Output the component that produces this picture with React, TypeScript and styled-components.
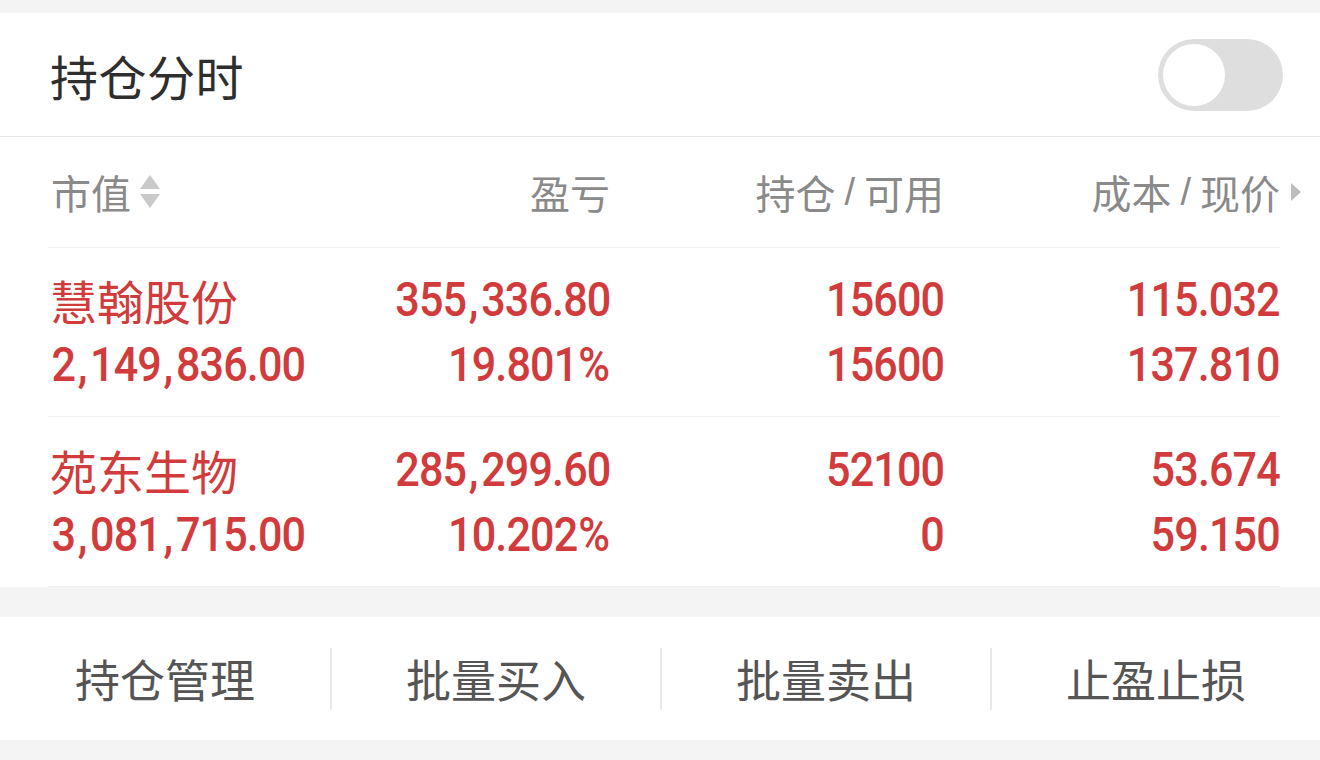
import React from "react";
import styled, { createGlobalStyle } from "styled-components";

const GlobalStyle = createGlobalStyle`
  html, body { margin: 0; padding: 0; background: #f4f4f4; }
  body { font-family: "Noto Sans CJK SC", "Noto Sans", sans-serif; }
  * { box-sizing: border-box; }
`;

const RED = "#d13b3b";
const NUM_FONT = `"Roboto", "Noto Sans", sans-serif`;

const Page = styled.div`
  width: 1320px;
  height: 760px;
  padding-top: 13px;
  background: #f4f4f4;
  overflow: hidden;
`;

const Card = styled.section`
  background: #fff;
`;

const Header = styled.header`
  height: 124px;
  display: flex;
  align-items: center;
  justify-content: space-between;
  padding: 0 37px 0 50px;
  border-bottom: 1px solid #e6e6e6;
`;

const Title = styled.h1`
  margin: 0;
  font-size: 48px;
  font-weight: 400;
  color: #2e2e2e;
  letter-spacing: 0.5px;
`;

const Toggle = styled.div`
  width: 125px;
  height: 72px;
  border-radius: 36px;
  background: #dedede;
  display: flex;
  align-items: center;
  padding-left: 5px;
`;

const Knob = styled.div`
  width: 62px;
  height: 62px;
  border-radius: 50%;
  background: #fff;
`;

const Table = styled.div`
  padding: 0 40px 0 48px;
`;

const Grid = styled.div<{ $h: number }>`
  display: grid;
  grid-template-columns: 282px 280px 334px 1fr;
  height: ${(p) => p.$h}px;
  align-items: center;
  border-bottom: 1px solid #efefef;
`;

const HeadCell = styled.div<{ $right?: boolean }>`
  position: relative;
  display: flex;
  align-items: center;
  justify-content: ${(p) => (p.$right ? "flex-end" : "flex-start")};
  font-size: 40px;
  color: #8a8a8a;
  padding-left: ${(p) => (p.$right ? 0 : 3)}px;
`;

const Slash = styled.span`
  font-family: "Liberation Sans", sans-serif;
  font-size: 38px;
  margin: 0 9px;
`;

const SortIcon = styled.svg`
  margin-left: 8px;
  width: 22px;
  height: 40px;
`;

const MoreArrow = styled.svg`
  position: absolute;
  right: -22px;
  top: 50%;
  transform: translateY(-50%);
  width: 12px;
  height: 20px;
`;

const Cell = styled.div<{ $right?: boolean }>`
  display: flex;
  flex-direction: column;
  align-items: ${(p) => (p.$right ? "flex-end" : "flex-start")};
  color: ${RED};
`;

const NameLine = styled.div`
  height: 65px;
  line-height: 65px;
  font-size: 47px;
  padding-left: 2px;
  white-space: nowrap;
`;

const NumLine = styled.div<{ $right?: boolean }>`
  height: 65px;
  line-height: 65px;
  font-family: ${NUM_FONT};
  font-size: 49px;
  font-weight: 500;
  letter-spacing: -1px;
  padding-left: 4px;
  white-space: nowrap;
  transform: scaleX(0.88);
  transform-origin: ${(p) => (p.$right ? "right" : "left")} center;
`;

const Comma = styled.span`
  margin: 0 4px 0 3px;
`;

const Percent = styled.span`
  margin-left: 1px;
  letter-spacing: 0;
`;

const Gap = styled.div`
  height: 30px;
  background: #f4f4f4;
`;

const Actions = styled.nav`
  height: 123px;
  background: #fff;
  display: grid;
  grid-template-columns: repeat(4, 1fr);
  align-items: center;
`;

const Action = styled.div<{ $divider?: boolean }>`
  height: 62px;
  display: flex;
  align-items: center;
  justify-content: center;
  font-size: 45px;
  color: #555;
  border-left: ${(p) => (p.$divider ? "2px solid #e8e8e8" : "none")};
`;

function Num({ value, right }: { value: string; right?: boolean }) {
  const parts = value.split(/([,%])/).filter((s) => s !== "");
  return (
    <NumLine $right={right}>
      {parts.map((p, i) =>
        p === "," ? <Comma key={i}>,</Comma> : p === "%" ? <Percent key={i}>%</Percent> : <React.Fragment key={i}>{p}</React.Fragment>
      )}
    </NumLine>
  );
}

type Row = { name: string; mv: string; pl: string; pct: string; hold: string; avail: string; cost: string; price: string };

const rows: Row[] = [
  { name: "慧翰股份", mv: "2,149,836.00", pl: "355,336.80", pct: "19.801%", hold: "15600", avail: "15600", cost: "115.032", price: "137.810" },
  { name: "苑东生物", mv: "3,081,715.00", pl: "285,299.60", pct: "10.202%", hold: "52100", avail: "0", cost: "53.674", price: "59.150" },
];

export default function App() {
  return (
    <Page>
      <GlobalStyle />
      <Card>
        <Header>
          <Title>持仓分时</Title>
          <Toggle>
            <Knob />
          </Toggle>
        </Header>
        <Table>
          <Grid $h={111}>
            <HeadCell>
              市值
              <SortIcon viewBox="0 0 22 40">
                <polygon points="11,3 21,17 1,17" fill="#c9c9c9" />
                <polygon points="1,22 21,22 11,36" fill="#c9c9c9" />
              </SortIcon>
            </HeadCell>
            <HeadCell $right>盈亏</HeadCell>
            <HeadCell $right>
              持仓<Slash>/</Slash>可用
            </HeadCell>
            <HeadCell $right>
              成本<Slash>/</Slash>现价
              <MoreArrow viewBox="0 0 12 20">
                <polygon points="1,1 11,10 1,19" fill="#bdbdbd" />
              </MoreArrow>
            </HeadCell>
          </Grid>
          {rows.map((r, i) => (
            <Grid key={r.name} $h={i === 0 ? 169 : 170}>
              <Cell>
                <NameLine>{r.name}</NameLine>
                <Num value={r.mv} />
              </Cell>
              <Cell $right>
                <Num value={r.pl} right />
                <Num value={r.pct} right />
              </Cell>
              <Cell $right>
                <Num value={r.hold} right />
                <Num value={r.avail} right />
              </Cell>
              <Cell $right>
                <Num value={r.cost} right />
                <Num value={r.price} right />
              </Cell>
            </Grid>
          ))}
        </Table>
      </Card>
      <Gap />
      <Actions>
        <Action>持仓管理</Action>
        <Action $divider>批量买入</Action>
        <Action $divider>批量卖出</Action>
        <Action $divider>止盈止损</Action>
      </Actions>
    </Page>
  );
}
